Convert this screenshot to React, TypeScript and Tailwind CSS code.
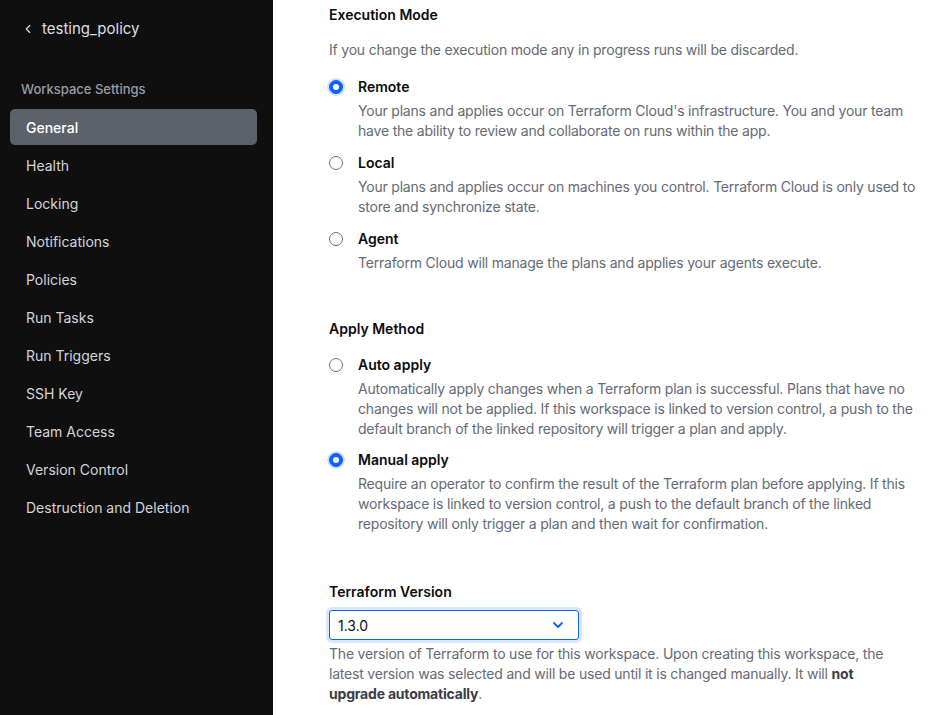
import { ChevronLeft, ChevronDown } from "lucide-react";

const navItems = [
  "General",
  "Health",
  "Locking",
  "Notifications",
  "Policies",
  "Run Tasks",
  "Run Triggers",
  "SSH Key",
  "Team Access",
  "Version Control",
  "Destruction and Deletion",
];

function Radio({ checked }: { checked: boolean }) {
  return checked ? (
    <span className="mt-[3px] flex h-[14px] w-[14px] shrink-0 items-center justify-center rounded-full border border-[#1060ff] bg-[#1060ff] shadow-[0_0_0_2px_rgba(16,96,255,0.2)]">
      <span className="h-[6px] w-[6px] rounded-full bg-white" />
    </span>
  ) : (
    <span className="mt-[3px] h-[14px] w-[14px] shrink-0 rounded-full border border-[#6b6f78] bg-white" />
  );
}

function Option({
  label,
  checked,
  children,
}: {
  label: string;
  checked: boolean;
  children: React.ReactNode;
}) {
  return (
    <div className="flex gap-[15px]">
      <Radio checked={checked} />
      <div>
        <div className="text-[14px] leading-5 font-semibold text-[#0c0c0e]">{label}</div>
        <p className="mt-1 text-[14px] leading-5 tracking-[-0.2px] text-[#656a76]">{children}</p>
      </div>
    </div>
  );
}

export default function App() {
  return (
    <div
      className="flex h-[715px] w-[945px] overflow-hidden bg-white"
      style={{ fontFamily: "Inter, 'Noto Sans', sans-serif" }}
    >
      {/* Sidebar */}
      <aside className="w-[273px] shrink-0 bg-[#0f0f10] pl-[10px] pr-[16px]">
        <div className="flex items-center gap-[7px] pl-[11px] pt-[19px] text-[15px] leading-5 text-[#dedfe3]">
          <ChevronLeft size={14} strokeWidth={2} />
          <span>testing_policy</span>
        </div>
        <div className="mt-[40px] pl-[11px] text-[13px] leading-5 font-medium text-[#9a9ca5]">
          Workspace Settings
        </div>
        <nav className="mt-[10px] flex flex-col gap-[2px]">
          {navItems.map((item, i) => (
            <div
              key={item}
              className={
                i === 0
                  ? "flex h-9 items-center rounded-[5px] bg-[#5d616c] px-4 text-[14px] font-medium text-white"
                  : "flex h-9 items-center rounded-[5px] px-4 text-[14px] text-[#d3d5da]"
              }
            >
              {item}
            </div>
          ))}
        </nav>
      </aside>

      {/* Content */}
      <main className="flex-1 pl-[56px] pr-[27px] pt-[5px]">
        <h2 className="text-[14px] leading-5 font-semibold text-[#0c0c0e]">Execution Mode</h2>
        <p className="mt-[15px] text-[14px] leading-5 tracking-[-0.2px] text-[#656a76]">
          If you change the execution mode any in progress runs will be discarded.
        </p>
        <div className="mt-[17px] flex flex-col gap-3">
          <Option label="Remote" checked>
            Your plans and applies occur on Terraform Cloud's infrastructure. You and your team have
            the ability to review and collaborate on runs within the app.
          </Option>
          <Option label="Local" checked={false}>
            Your plans and applies occur on machines you control. Terraform Cloud is only used to
            store and synchronize state.
          </Option>
          <Option label="Agent" checked={false}>
            Terraform Cloud will manage the plans and applies your agents execute.
          </Option>
        </div>

        <h2 className="mt-[46px] text-[14px] leading-5 font-semibold text-[#0c0c0e]">Apply Method</h2>
        <div className="mt-4 flex flex-col gap-[11px]">
          <Option label="Auto apply" checked={false}>
            Automatically apply changes when a Terraform plan is successful. Plans that have no
            changes will not be applied. If this workspace is linked to version control, a push to
            the default branch of the linked repository will trigger a plan and apply.
          </Option>
          <Option label="Manual apply" checked>
            Require an operator to confirm the result of the Terraform plan before applying. If this
            workspace is linked to version control, a push to the default branch of the linked
            repository will only trigger a plan and then wait for confirmation.
          </Option>
        </div>

        <h2 className="mt-[48px] text-[14px] leading-5 font-semibold text-[#0c0c0e]">
          Terraform Version
        </h2>
        <div className="mt-2 flex h-[30px] w-[250px] items-center justify-between rounded-[3px] border border-[#1060ff] pl-[8px] pr-[12px] shadow-[0_0_0_3px_rgba(16,96,255,0.15)]">
          <span className="text-[14px] text-[#0c0c0e]">1.3.0</span>
          <ChevronDown size={16} strokeWidth={2.75} className="text-[#1060ff]" />
        </div>
        <p className="mt-1 w-[565px] text-[14px] leading-5 tracking-[-0.2px] text-[#656a76]">
          The version of Terraform to use for this workspace. Upon creating this workspace, the
          latest version was selected and will be used until it is changed manually. It will{" "}
          <strong className="font-bold text-[#3b3d45]">not upgrade automatically</strong>.
        </p>
      </main>
    </div>
  );
}
